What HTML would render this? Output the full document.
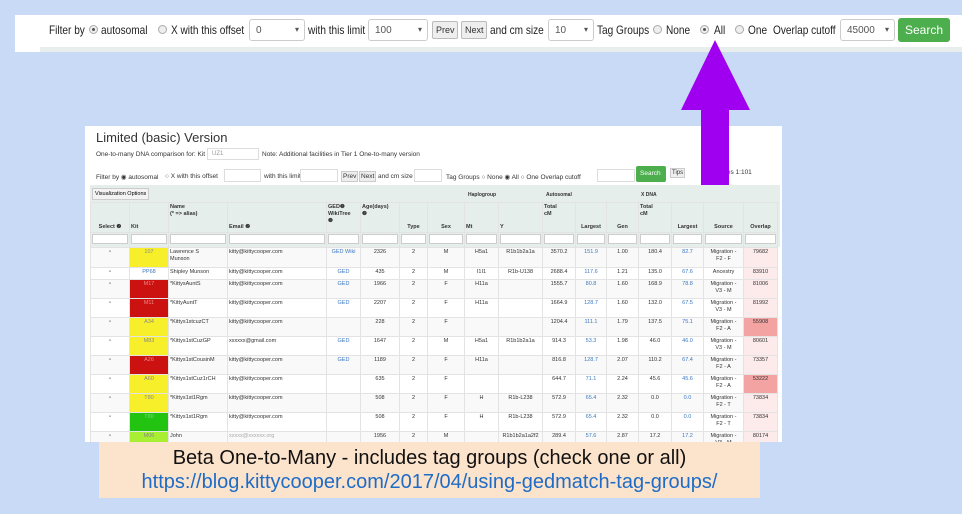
<!DOCTYPE html>
<html><head><meta charset="utf-8"><style>
*{margin:0;padding:0;box-sizing:border-box}
body{width:962px;height:514px;background:#c9daf6;position:relative;overflow:hidden;font-family:"Liberation Sans",sans-serif;}
.a{position:absolute;white-space:nowrap}
#top{left:15px;top:15px;width:947px;height:37px;background:#fff}
#top .t{position:absolute;top:8px;font-size:12px;color:#222;transform:scaleX(0.84);transform-origin:left top}
.sel{position:absolute;top:4px;height:22px;border:1px solid #ccc;border-radius:3px;background:#fff;font-size:10px;color:#555;padding:5px 6px}
.sel:after{content:"▾";position:absolute;right:5px;top:5px;font-size:8px}
.btn{position:absolute;top:6px;height:18px;border:1px solid #bbb;border-radius:2px;background:#eee;font-size:9px;color:#333;padding:3px 3px;width:26px;text-align:center}
.rad{position:absolute;top:10px;width:9px;height:9px;border-radius:50%;border:1px solid #aaa;background:#eee}
.rad.on:after{content:"";position:absolute;left:2px;top:2px;width:3px;height:3px;border-radius:50%;background:#555}
#shot{left:85px;top:126px;width:697px;height:316px;background:#fff;overflow:hidden}
table{border-collapse:collapse;table-layout:fixed;position:absolute;left:5px;font-size:5.5px;color:#333}
td{border:1px solid #e3e3e3;overflow:hidden;text-align:center;vertical-align:top;padding:1px 1px;line-height:7px}
td.l{text-align:left}
.b{color:#3a78c3}
.f{position:absolute;top:47px;font-size:6.5px;color:#333}
.bx{position:absolute;top:43px;height:13px;border:1px solid #ddd;background:#fff}
</style></head><body>
<div id="top" class="a">
<div class="t" style="left:34px">Filter by</div>
<span class="rad on" style="left:74px"></span>
<div class="t" style="left:86px">autosomal</div>
<span class="rad" style="left:143px"></span>
<div class="t" style="left:156px">X with this offset</div>
<div class="sel" style="left:234px;width:56px">0</div>
<div class="t" style="left:293px">with this limit</div>
<div class="sel" style="left:353px;width:60px">100</div>
<div class="btn" style="left:417px">Prev</div>
<div class="btn" style="left:446px">Next</div>
<div class="t" style="left:475px">and cm size</div>
<div class="sel" style="left:533px;width:46px">10</div>
<div class="t" style="left:582px">Tag Groups</div>
<span class="rad" style="left:638px"></span>
<div class="t" style="left:651px">None</div>
<span class="rad on" style="left:685px"></span>
<div class="t" style="left:699px">All</div>
<span class="rad" style="left:720px"></span>
<div class="t" style="left:733px">One</div>
<div class="t" style="left:758px">Overlap cutoff</div>
<div class="sel" style="left:825px;width:55px">45000</div>
<div class="a" style="left:883px;top:3px;width:52px;height:24px;background:#4cae4c;border-radius:3px;color:#fff;font-size:12px;padding:5px 7px">Search</div>
<div class="a" style="left:25px;top:32px;width:922px;height:5px;background:#e8eeec"></div>
</div>
<div id="shot" class="a">
<div class="a" style="left:11px;top:4px;font-size:13px;color:#333">Limited (basic) Version</div>
<div class="a" style="left:11px;top:25px;font-size:6.5px;color:#333">One-to-many DNA comparison for: Kit</div>
<div class="a" style="left:122px;top:22px;width:52px;height:12px;border:1px solid #ddd;font-size:6px;color:#999;padding:2px 4px">UZ1</div>
<div class="a" style="left:177px;top:25px;font-size:6.5px;color:#333">Note: Additional facilities in Tier 1 One-to-many version</div>
<div class="f" style="left:11px">Filter by ◉ autosomal</div>
<div class="f" style="left:80px">○ X with this offset</div>
<div class="bx" style="left:139px;width:37px"></div>
<div class="f" style="left:179px">with this limit</div>
<div class="bx" style="left:215px;width:38px"></div>
<div class="f" style="left:256px;top:45px;border:1px solid #ccc;background:#eee;padding:1px">Prev</div>
<div class="f" style="left:274px;top:45px;border:1px solid #ccc;background:#eee;padding:1px">Next</div>
<div class="f" style="left:293px">and cm size</div>
<div class="bx" style="left:329px;width:28px"></div>
<div class="f" style="left:361px">Tag Groups ○ None ◉ All ○ One Overlap cutoff</div>
<div class="bx" style="left:512px;width:38px"></div>
<div class="a" style="left:551px;top:40px;width:30px;height:16px;background:#4cae4c;border-radius:2px;color:#fff;font-size:6.5px;padding:4px 4px">Search</div>
<div class="a" style="left:585px;top:42px;font-size:6px;color:#333;border:1px solid #ccc;background:#eee;padding:1px">Tips</div>
<div class="a" style="left:635px;top:43px;font-size:6.5px;color:#333">ches 1:101</div>
<div class="a" style="left:5px;top:59px;width:690px;height:62px;background:#e6eeec"></div>
<div class="a" style="left:7px;top:62px;font-size:5.5px;border:1px solid #ccc;background:#f3f3f3;padding:2px">Visualization Options</div>
<div class="a" style="left:383px;top:66px;font-size:5px;font-weight:bold;color:#333">Haplogroup</div>
<div class="a" style="left:461px;top:66px;font-size:5px;font-weight:bold;color:#333">Autosomal</div>
<div class="a" style="left:556px;top:66px;font-size:5px;font-weight:bold;color:#333">X DNA</div>
<table style="top:76px">
<colgroup><col style="width:39px"><col style="width:39px"><col style="width:59px"><col style="width:99px"><col style="width:34px"><col style="width:39px"><col style="width:28px"><col style="width:37px"><col style="width:34px"><col style="width:44px"><col style="width:33px"><col style="width:31px"><col style="width:32px"><col style="width:33px"><col style="width:32px"><col style="width:40px"><col style="width:34px"></colgroup>
<tr style="height:30px;background:#e6eeec;font-weight:bold"><td style="vertical-align:bottom">Select ❷</td><td class="l" style="vertical-align:bottom">Kit</td><td class="l">Name<br>(* =&gt; alias)</td><td class="l" style="vertical-align:bottom">Email ❷</td><td class="l">GED❷<br>WikiTree<br>❷</td><td class="l">Age(days)<br>❷</td><td style="vertical-align:bottom">Type</td><td style="vertical-align:bottom">Sex</td><td class="l" style="vertical-align:bottom">Mt</td><td class="l" style="vertical-align:bottom">Y</td><td class="l">Total<br>cM</td><td style="vertical-align:bottom">Largest</td><td style="vertical-align:bottom">Gen</td><td class="l">Total<br>cM</td><td style="vertical-align:bottom">Largest</td><td style="vertical-align:bottom">Source</td><td style="vertical-align:bottom">Overlap</td></tr>
<tr style="height:15px;background:#e6eeec"><td><div style="height:10px;background:#fff;border:1px solid #ccc"></div></td><td><div style="height:10px;background:#fff;border:1px solid #ccc"></div></td><td><div style="height:10px;background:#fff;border:1px solid #ccc"></div></td><td><div style="height:10px;background:#fff;border:1px solid #ccc"></div></td><td><div style="height:10px;background:#fff;border:1px solid #ccc"></div></td><td><div style="height:10px;background:#fff;border:1px solid #ccc"></div></td><td><div style="height:10px;background:#fff;border:1px solid #ccc"></div></td><td><div style="height:10px;background:#fff;border:1px solid #ccc"></div></td><td><div style="height:10px;background:#fff;border:1px solid #ccc"></div></td><td><div style="height:10px;background:#fff;border:1px solid #ccc"></div></td><td><div style="height:10px;background:#fff;border:1px solid #ccc"></div></td><td><div style="height:10px;background:#fff;border:1px solid #ccc"></div></td><td><div style="height:10px;background:#fff;border:1px solid #ccc"></div></td><td><div style="height:10px;background:#fff;border:1px solid #ccc"></div></td><td><div style="height:10px;background:#fff;border:1px solid #ccc"></div></td><td><div style="height:10px;background:#fff;border:1px solid #ccc"></div></td><td><div style="height:10px;background:#fff;border:1px solid #ccc"></div></td></tr>
<tr style="height:20px;background:#f9f9f9"><td>▫</td><td style="background:#f7ef2a;color:#888">107</td><td class="l">Lawrence S<br>Munson</td><td class="l">kitty@kittycooper.com</td><td class="b">GED Wiki</td><td>2326</td><td>2</td><td>M</td><td>H5a1</td><td>R1b1b2a1a</td><td>3570.2</td><td class="b">151.9</td><td>1.00</td><td>180.4</td><td class="b">82.7</td><td>Migration -<br>F2 - F</td><td style="background:#fdeaea">79682</td></tr>
<tr style="height:12px"><td>▫</td><td class="b">PP68</td><td class="l">Shipley Munson</td><td class="l">kitty@kittycooper.com</td><td class="b">GED</td><td>435</td><td>2</td><td>M</td><td>I1I1</td><td>R1b-U138</td><td>2688.4</td><td class="b">117.6</td><td>1.21</td><td>135.0</td><td class="b">67.6</td><td>Ancestry</td><td style="background:#fdeaea">83910</td></tr>
<tr style="height:19px;background:#f9f9f9"><td>▫</td><td style="background:#cc1111;color:#e88">M17</td><td class="l">*KittysAuntS</td><td class="l">kitty@kittycooper.com</td><td class="b">GED</td><td>1966</td><td>2</td><td>F</td><td>H11a</td><td></td><td>1555.7</td><td class="b">80.8</td><td>1.60</td><td>168.9</td><td class="b">78.8</td><td>Migration -<br>V3 - M</td><td style="background:#fdeaea">81006</td></tr>
<tr style="height:19px"><td>▫</td><td style="background:#cc1111;color:#e88">M11</td><td class="l">*KittyAuntT</td><td class="l">kitty@kittycooper.com</td><td class="b">GED</td><td>2207</td><td>2</td><td>F</td><td>H11a</td><td></td><td>1664.9</td><td class="b">128.7</td><td>1.60</td><td>132.0</td><td class="b">67.5</td><td>Migration -<br>V3 - M</td><td style="background:#fdeaea">81992</td></tr>
<tr style="height:19px;background:#f9f9f9"><td>▫</td><td style="background:#f7ef2a;color:#888">A34</td><td class="l">*Kittys1stcuzCT</td><td class="l">kitty@kittycooper.com</td><td></td><td>228</td><td>2</td><td>F</td><td></td><td></td><td>1204.4</td><td class="b">111.1</td><td>1.79</td><td>137.5</td><td class="b">75.1</td><td>Migration -<br>F2 - A</td><td style="background:#f4a3a3">55908</td></tr>
<tr style="height:19px"><td>▫</td><td style="background:#f7ef2a;color:#888">M83</td><td class="l">*Kittys1stCuzGP</td><td class="l">xxxxxx@gmail.com</td><td class="b">GED</td><td>1647</td><td>2</td><td>M</td><td>H5a1</td><td>R1b1b2a1a</td><td>914.3</td><td class="b">53.3</td><td>1.98</td><td>46.0</td><td class="b">46.0</td><td>Migration -<br>V3 - M</td><td style="background:#fdeaea">80601</td></tr>
<tr style="height:19px;background:#f9f9f9"><td>▫</td><td style="background:#cc1111;color:#e88">A26</td><td class="l">*Kittys1stCousinM</td><td class="l">kitty@kittycooper.com</td><td class="b">GED</td><td>1189</td><td>2</td><td>F</td><td>H11a</td><td></td><td>816.8</td><td class="b">128.7</td><td>2.07</td><td>110.2</td><td class="b">67.4</td><td>Migration -<br>F2 - A</td><td style="background:#fdeaea">73357</td></tr>
<tr style="height:19px"><td>▫</td><td style="background:#f7ef2a;color:#888">A60</td><td class="l">*Kittys1stCuz1rCH</td><td class="l">kitty@kittycooper.com</td><td></td><td>635</td><td>2</td><td>F</td><td></td><td></td><td>644.7</td><td class="b">71.1</td><td>2.24</td><td>45.6</td><td class="b">45.6</td><td>Migration -<br>F2 - A</td><td style="background:#f4a3a3">53222</td></tr>
<tr style="height:19px;background:#f9f9f9"><td>▫</td><td style="background:#f7ef2a;color:#888">T80</td><td class="l">*Kittys1st1Rgm</td><td class="l">kitty@kittycooper.com</td><td></td><td>508</td><td>2</td><td>F</td><td>H</td><td>R1b-L238</td><td>572.9</td><td class="b">65.4</td><td>2.32</td><td>0.0</td><td class="b">0.0</td><td>Migration -<br>F2 - T</td><td style="background:#fdeaea">73834</td></tr>
<tr style="height:19px"><td>▫</td><td style="background:#22c411;color:#7d7">T80</td><td class="l">*Kittys1st1Rgm</td><td class="l">kitty@kittycooper.com</td><td></td><td>508</td><td>2</td><td>F</td><td>H</td><td>R1b-L238</td><td>572.9</td><td class="b">65.4</td><td>2.32</td><td>0.0</td><td class="b">0.0</td><td>Migration -<br>F2 - T</td><td style="background:#fdeaea">73834</td></tr>
<tr style="height:19px;background:#f9f9f9"><td>▫</td><td style="background:#a8ee33;color:#888">M06</td><td class="l">John</td><td class="l" style="color:#aaa">xxxxx@xxxxxx.org</td><td></td><td>1956</td><td>2</td><td>M</td><td></td><td>R1b1b2a1a2f2</td><td>289.4</td><td class="b">57.6</td><td>2.87</td><td>17.2</td><td class="b">17.2</td><td>Migration -<br>V3 - M</td><td style="background:#fdeaea">80174</td></tr>
</table>
</div>
<svg class="a" style="left:0;top:0" width="962" height="514"><polygon points="715,40 750,110 729,110 729,185 701,185 701,110 681,110" fill="#a000f0"/></svg>
<div class="a" style="left:99px;top:442px;width:661px;height:56px;background:#fce3cc;text-align:center">
<div style="font-size:20px;color:#111;margin-top:4px;line-height:24px">Beta One-to-Many - includes tag groups (check one or all)</div>
<div style="font-size:20px;color:#1e6cc8;line-height:24px">https://blog.kittycooper.com/2017/04/using-gedmatch-tag-groups/</div>
</div>
</body></html>
